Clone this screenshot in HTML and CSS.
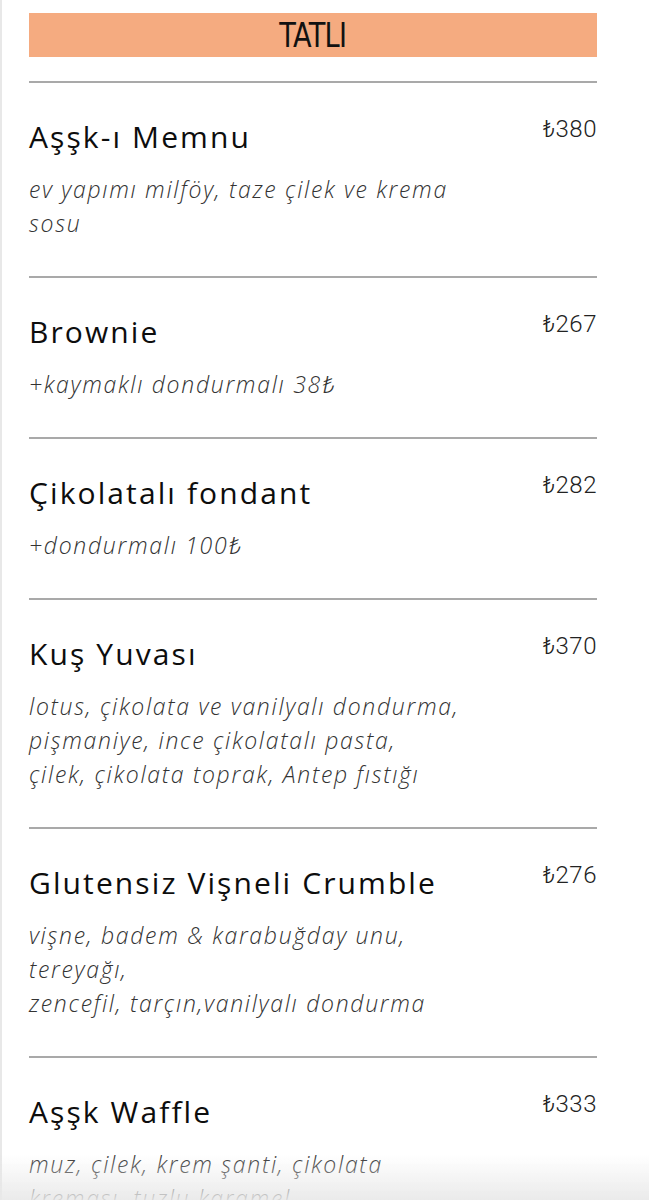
FILE: index.html
```html
<!DOCTYPE html>
<html lang="tr">
<head>
<meta charset="utf-8">
<title>Tatlı</title>
<link rel="stylesheet" href="styles.css">
</head>
<body>
<div class="page">
  <div class="category"><span class="category-title">TATLI</span></div>
  <div class="menu">
    <div class="item">
      <div class="item-head"><h2 class="item-name">Aşşk-ı Memnu</h2><span class="item-price">₺380</span></div>
      <p class="item-desc">ev yapımı milföy, taze çilek ve krema<br>sosu</p>
    </div>
    <div class="item">
      <div class="item-head"><h2 class="item-name">Brownie</h2><span class="item-price">₺267</span></div>
      <p class="item-desc">+kaymaklı dondurmalı 38₺</p>
    </div>
    <div class="item">
      <div class="item-head"><h2 class="item-name">Çikolatalı fondant</h2><span class="item-price">₺282</span></div>
      <p class="item-desc">+dondurmalı 100₺</p>
    </div>
    <div class="item">
      <div class="item-head"><h2 class="item-name">Kuş Yuvası</h2><span class="item-price">₺370</span></div>
      <p class="item-desc">lotus, çikolata ve vanilyalı dondurma,<br>pişmaniye, ince çikolatalı pasta,<br>çilek, çikolata toprak, Antep fıstığı</p>
    </div>
    <div class="item">
      <div class="item-head"><h2 class="item-name">Glutensiz Vişneli Crumble</h2><span class="item-price">₺276</span></div>
      <p class="item-desc">vişne, badem &amp; karabuğday unu,<br>tereyağı,<br>zencefil, tarçın,vanilyalı dondurma</p>
    </div>
    <div class="item">
      <div class="item-head"><h2 class="item-name">Aşşk Waffle</h2><span class="item-price">₺333</span></div>
      <p class="item-desc">muz, çilek, krem şanti, çikolata<br>kreması, tuzlu karamel</p>
    </div>
  </div>
</div>
<div class="bottom-fade"></div>
</body>
</html>
```

FILE: styles.css
```css
html, body {
  margin: 0;
  padding: 0;
  background: #ffffff;
}

body {
  color: #111111;
  font-family: "Open Sans", "Noto Sans", "DejaVu Sans", sans-serif;
}

.page {
  min-height: 1200px;
  box-sizing: border-box;
  border-left: 2px solid #e8e8e8;
  padding: 13px 52px 0 27px;
}

.category {
  height: 44px;
  background: #f5ab80;
  display: flex;
  align-items: center;
  justify-content: center;
  border-bottom: 24px solid #ffffff;
  box-sizing: content-box;
}

.category-title {
  font-family: "DejaVu Sans", sans-serif;
  font-size: 34px;
  line-height: 44px;
  letter-spacing: -1px;
  color: #111;
  display: inline-block;
  transform: scaleX(0.8);
}

.item {
  border-top: 2px solid #a9a9a9;
  padding: 34px 0 36px;
}

.item-head {
  display: flex;
  justify-content: space-between;
  align-items: flex-start;
}

.item-name {
  margin: 0;
  font-family: "Open Sans", sans-serif;
  font-weight: 400;
  font-size: 30px;
  line-height: 40px;
  letter-spacing: 2.1px;
  color: #0d0d0d;
}

.item-price {
  margin-top: -2px;
  font-family: "Roboto", "Noto Sans", sans-serif;
  font-weight: 300;
  font-size: 24px;
  line-height: 28px;
  letter-spacing: 0.5px;
  color: #222;
}

.item-desc {
  margin: 15px 0 0;
  font-family: "Open Sans", "Noto Sans", sans-serif;
  font-weight: 300;
  font-style: italic;
  font-size: 23px;
  line-height: 34px;
  color: #333333;
  letter-spacing: 1.7px;
}

.bottom-fade {
  position: fixed;
  left: 0;
  right: 0;
  bottom: 0;
  height: 45px;
  background: linear-gradient(to bottom, rgba(240,240,240,0), rgba(232,232,232,0.9));
  pointer-events: none;
}
```
